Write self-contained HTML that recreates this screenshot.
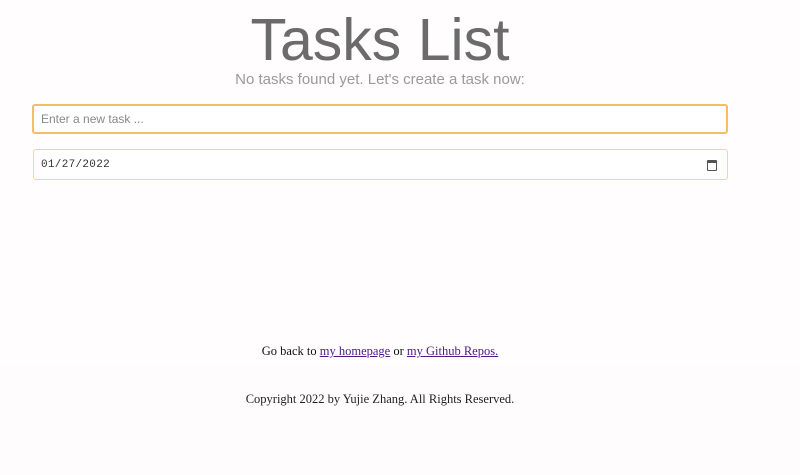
<!DOCTYPE html>
<html><head><style>
html,body{margin:0;padding:0;background:#fffdfe;width:800px;height:475px;overflow:hidden;position:relative}
h1{position:absolute;left:0;width:760px;top:7px;margin:0;text-align:center;font:400 59px "Liberation Sans",sans-serif;color:#6b6b6b;line-height:66px}
.sub{position:absolute;left:0;width:760px;top:71px;text-align:center;font:15px "Liberation Sans",sans-serif;color:#9a9a9a}
.in{position:absolute;left:32px;top:104px;width:685px;height:26px;border:2px solid #f7bd63;border-radius:3px;background:#fff;font:12px "Liberation Sans",sans-serif;color:#888;line-height:26px;padding-left:7px;box-sizing:content-box}
.date{position:absolute;left:33px;top:149px;width:695px;height:31px;border:1px solid #f3d597;border-radius:3px;background:#fff;font:11px "Liberation Mono",monospace;color:#333;line-height:31px;padding-left:7px;box-sizing:border-box;letter-spacing:0.3px}
.cal{position:absolute;right:10px;top:10px;width:8px;height:7px;border:1px solid #555;border-top-width:3px;border-radius:1px}
.links{position:absolute;left:0;width:760px;top:344px;text-align:center;font:12.5px "Liberation Serif",serif;color:#111}
.links a{color:#4b1a86}
.foot{position:absolute;left:0;top:365px;width:800px;height:110px;background:#fffcfe}
.copy{position:absolute;left:0;width:760px;top:392px;text-align:center;font:12.5px "Liberation Serif",serif;color:#222}
</style></head><body>
<h1>Tasks List</h1>
<div class="sub">No tasks found yet. Let's create a task now:</div>
<div class="in">Enter a new task ...</div>
<div class="date">01/27/2022<span class="cal"></span></div>
<div class="foot"></div>
<div class="links">Go back to <a href="#">my homepage</a> or <a href="#">my Github Repos.</a></div>
<div class="copy">Copyright 2022 by Yujie Zhang. All Rights Reserved.</div>
</body></html>
